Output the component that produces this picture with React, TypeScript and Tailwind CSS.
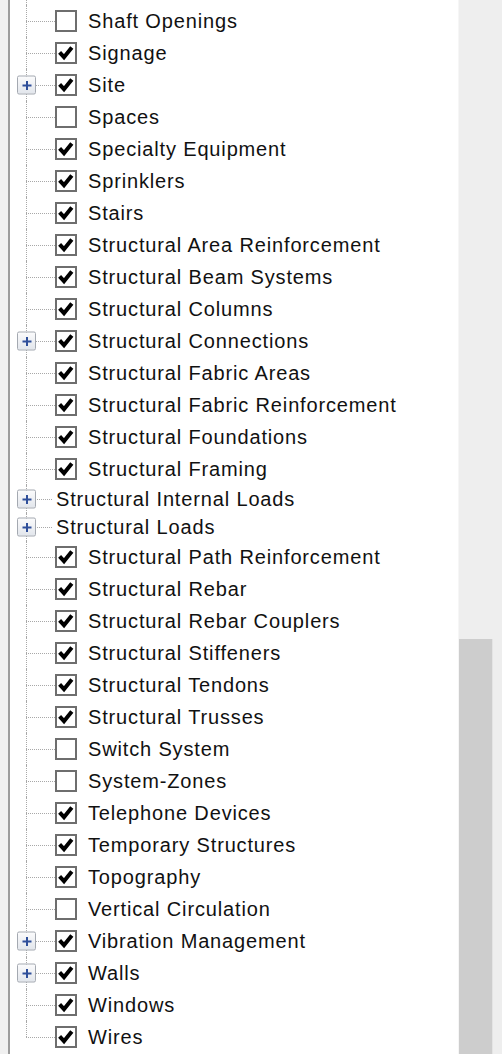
import React from 'react';

type Item = {
  label: string;
  checked?: boolean;
  noBox?: boolean;
  expandable?: boolean;
};

const items: Item[] = [
  { label: 'Security Devices', checked: true },
  { label: 'Shaft Openings', checked: false },
  { label: 'Signage', checked: true },
  { label: 'Site', checked: true, expandable: true },
  { label: 'Spaces', checked: false },
  { label: 'Specialty Equipment', checked: true },
  { label: 'Sprinklers', checked: true },
  { label: 'Stairs', checked: true },
  { label: 'Structural Area Reinforcement', checked: true },
  { label: 'Structural Beam Systems', checked: true },
  { label: 'Structural Columns', checked: true },
  { label: 'Structural Connections', checked: true, expandable: true },
  { label: 'Structural Fabric Areas', checked: true },
  { label: 'Structural Fabric Reinforcement', checked: true },
  { label: 'Structural Foundations', checked: true },
  { label: 'Structural Framing', checked: true },
  { label: 'Structural Internal Loads', noBox: true, expandable: true },
  { label: 'Structural Loads', noBox: true, expandable: true },
  { label: 'Structural Path Reinforcement', checked: true },
  { label: 'Structural Rebar', checked: true },
  { label: 'Structural Rebar Couplers', checked: true },
  { label: 'Structural Stiffeners', checked: true },
  { label: 'Structural Tendons', checked: true },
  { label: 'Structural Trusses', checked: true },
  { label: 'Switch System', checked: false },
  { label: 'System-Zones', checked: false },
  { label: 'Telephone Devices', checked: true },
  { label: 'Temporary Structures', checked: true },
  { label: 'Topography', checked: true },
  { label: 'Vertical Circulation', checked: false },
  { label: 'Vibration Management', checked: true, expandable: true },
  { label: 'Walls', checked: true, expandable: true },
  { label: 'Windows', checked: true },
  { label: 'Wires', checked: true },
];

function CheckBox({ checked }: { checked?: boolean }) {
  return (
    <div className="w-[22px] h-[22px] border-2 border-[#6e6e6e] bg-white flex items-center justify-center shrink-0">
      {checked && (
        <svg width="18" height="18" viewBox="0 0 18 18">
          <path d="M2.6 8.4 L7 13.2 L14.8 3.4" fill="none" stroke="#000" strokeWidth="4" strokeLinejoin="miter" />
        </svg>
      )}
    </div>
  );
}

function PlusBox() {
  return (
    <div className="absolute left-[7px] top-1/2 -translate-y-1/2 w-[19px] h-[19px] border border-[#a4a9b1] rounded-[2px] bg-gradient-to-b from-[#fbfbfc] to-[#e2e6ec] flex items-center justify-center">
      <svg width="10" height="10" viewBox="0 0 10 10">
        <path d="M5 0.5 V9.5 M0.5 5 H9.5" stroke="#2f4f9a" strokeWidth="2" />
      </svg>
    </div>
  );
}

function Row({ item, last }: { item: Item; last: boolean }) {
  return (
    <div className={`flex items-center ${item.noBox ? 'h-[28px]' : 'h-[32px]'}`}>
      <div className="relative w-[45px] self-stretch shrink-0">
        <div
          className={`absolute left-[16px] top-0 border-l border-dotted border-[#a8a8a8] ${last ? 'h-1/2' : 'bottom-0'}`}
        />
        <div
          className={`absolute left-[16px] top-1/2 border-t border-dotted border-[#a8a8a8] ${item.noBox ? 'right-[3px]' : 'right-0'}`}
        />
        {item.expandable && <PlusBox />}
      </div>
      {item.noBox ? (
        <span className="ml-[1px] text-[20px] tracking-[0.85px] leading-none text-[#111] whitespace-nowrap">{item.label}</span>
      ) : (
        <>
          <CheckBox checked={item.checked} />
          <span className="ml-[11px] text-[20px] tracking-[0.85px] leading-none text-[#111] whitespace-nowrap">{item.label}</span>
        </>
      )}
    </div>
  );
}

export default function App() {
  return (
    <div
      className="w-[502px] h-[1054px] overflow-hidden flex bg-white"
      style={{ fontFamily: '"Liberation Sans", Arial, sans-serif' }}
    >
      <div className="w-[8px] bg-[#f0f0f0] shrink-0" />
      <div className="w-[2px] bg-[#9c9c9c] shrink-0" />
      <div className="flex-1 bg-white overflow-hidden">
        <div className="-mt-[27px]">
          {items.map((it, i) => (
            <Row key={it.label} item={it} last={i === items.length - 1} />
          ))}
        </div>
      </div>
      <div className="w-[44px] shrink-0 bg-[#eeeeee] flex flex-col justify-end border-l border-[#f6f6f6]">
        <div className="flex h-[415px]">
          <div className="w-[33px] bg-[#cdcdcd]" />
          <div className="flex-1 border-l border-[#e4e4e4]" />
        </div>
      </div>
    </div>
  );
}
